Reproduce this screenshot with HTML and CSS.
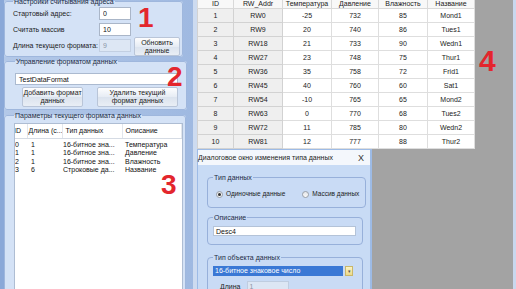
FILE: index.html
```html
<!DOCTYPE html>
<html lang="ru">
<head>
    <meta charset="UTF-8">
    <meta name="viewport" content="width=device-width, initial-scale=1.0">
    <title>Формат данных</title>
    <link rel="stylesheet" href="styles.css">
</head>
<body>
    <div class="app">
        <aside class="sidebar">
            <fieldset class="group group-read">
                <legend>Настройки считывания адреса</legend>
                <div class="read-grid">
                    <label>Стартовый адрес:</label>
                    <input class="field" type="text" value="0">
                    <span></span>
                    <label>Считать массив</label>
                    <input class="field" type="text" value="10">
                    <span></span>
                    <label>Длина текущего формата:</label>
                    <input class="field" type="text" value="9" disabled>
                    <button class="btn btn-refresh">Обновить<br>данные</button>
                </div>
            </fieldset>

            <fieldset class="group group-format">
                <legend>Управление форматом данных</legend>
                <div class="combo">
                    <span>TestDataFormat</span>
                    <span class="combo-arrow">&#9662;</span>
                </div>
                <div class="format-buttons">
                    <button class="btn btn-add">Добавить формат<br>данных</button>
                    <button class="btn btn-del">Удалить текущий<br>формат данных</button>
                </div>
            </fieldset>

            <fieldset class="group group-params">
                <legend>Параметры текущего формата данных</legend>
                <div class="listview">
                    <table class="list-table">
                        <colgroup>
                            <col class="c-id"><col class="c-len"><col class="c-type"><col class="c-desc">
                        </colgroup>
                        <thead>
                            <tr><th>ID</th><th>Длина (с...</th><th>Тип данных</th><th>Описание</th></tr>
                        </thead>
                        <tbody>
                            <tr><td>0</td><td>1</td><td>16-битное зна...</td><td>Температура</td></tr>
                            <tr><td>1</td><td>1</td><td>16-битное зна...</td><td>Давление</td></tr>
                            <tr><td>2</td><td>1</td><td>16-битное зна...</td><td>Влажность</td></tr>
                            <tr><td>3</td><td>6</td><td>Строковые да...</td><td>Название</td></tr>
                        </tbody>
                    </table>
                </div>
            </fieldset>
        </aside>

        <main class="workspace">
            <table class="grid">
                <colgroup>
                    <col class="g-id"><col class="g-addr"><col class="g-val"><col class="g-val2"><col class="g-val"><col class="g-val2">
                </colgroup>
                <thead>
                    <tr><th>ID</th><th>RW_Addr</th><th>Температура</th><th>Давление</th><th>Влажность</th><th>Название</th></tr>
                </thead>
                <tbody>
                    <tr><td class="rh">1</td><td class="rh">RW0</td><td>-25</td><td>732</td><td>85</td><td>Mond1</td></tr>
                    <tr><td class="rh">2</td><td class="rh">RW9</td><td>20</td><td>740</td><td>86</td><td>Tues1</td></tr>
                    <tr><td class="rh">3</td><td class="rh">RW18</td><td>21</td><td>733</td><td>90</td><td>Wedn1</td></tr>
                    <tr><td class="rh">4</td><td class="rh">RW27</td><td>23</td><td>748</td><td>75</td><td>Thur1</td></tr>
                    <tr><td class="rh">5</td><td class="rh">RW36</td><td>35</td><td>758</td><td>72</td><td>Frid1</td></tr>
                    <tr><td class="rh">6</td><td class="rh">RW45</td><td>40</td><td>760</td><td>60</td><td>Sat1</td></tr>
                    <tr><td class="rh">7</td><td class="rh">RW54</td><td>-10</td><td>765</td><td>65</td><td>Mond2</td></tr>
                    <tr><td class="rh">8</td><td class="rh">RW63</td><td>0</td><td>770</td><td>68</td><td>Tues2</td></tr>
                    <tr><td class="rh">9</td><td class="rh">RW72</td><td>11</td><td>785</td><td>80</td><td>Wedn2</td></tr>
                    <tr><td class="rh">10</td><td class="rh">RW81</td><td>12</td><td>777</td><td>88</td><td>Thur2</td></tr>
                </tbody>
            </table>

            <div class="dialog">
                <div class="dialog-title">
                    <span>Диалоговое окно изменения типа данных</span>
                    <span class="dialog-close">X</span>
                </div>
                <div class="dialog-body">
                    <fieldset class="dgroup dgroup-type">
                        <legend>Тип данных</legend>
                        <div class="radios">
                            <span class="radio"><span class="radio-dot checked"></span>Одиночные данные</span>
                            <span class="radio"><span class="radio-dot"></span>Массив данных</span>
                        </div>
                    </fieldset>
                    <fieldset class="dgroup dgroup-desc">
                        <legend>Описание</legend>
                        <div class="textbox">Desc4</div>
                    </fieldset>
                    <fieldset class="dgroup dgroup-object">
                        <legend>Тип объекта данных</legend>
                        <div class="dcombo">
                            <span class="dcombo-text">16-битное знаковое число</span>
                            <span class="dcombo-btn">&#9662;</span>
                        </div>
                        <div class="length-row">
                            <span>Длина</span>
                            <span class="textbox disabled">1</span>
                        </div>
                    </fieldset>
                </div>
            </div>
        </main>

        <span class="mark mark-1">1</span>
        <span class="mark mark-2">2</span>
        <span class="mark mark-3">3</span>
        <span class="mark mark-4">4</span>
    </div>
</body>
</html>
```

FILE: styles.css
```css
* {
    box-sizing: border-box;
}
body {
    margin: 0;
    width: 516px;
    height: 289px;
    overflow: hidden;
    background-color: #a3a3a3;
    font-family: "Liberation Sans", Arial, sans-serif;
    font-size: 7px;
    color: #1b1b1b;
}
.app {
    position: relative;
    display: flex;
    height: 289px;
    border-right: 3px solid #c9d8ee;
}

/* left panel */
.sidebar {
    width: 197px;
    flex: none;
    overflow: hidden;
    padding: 0 10px 0 4px;
    background: linear-gradient(to right, #8aa8d8 0, #8aa8d8 4px, #b3c8e8 4px, #9fb9e1 100%);
    border-right: 4px solid #cddbf0;
}
.group {
    margin: 0;
    padding: 0 2px 0 8px;
    border: 1px solid #9fb7dd;
    border-radius: 3px;
    background-color: #d4e2f6;
}
.group legend,
.dgroup legend {
    padding: 0 1px;
    font-size: 7px;
    line-height: 9px;
    color: #1d2d45;
    white-space: nowrap;
}
.group-read {
    margin-top: -3px;
    padding-bottom: 4px;
}
.read-grid {
    display: grid;
    grid-template-columns: 83px 32px 46px;
    grid-template-rows: repeat(3, 13px);
    column-gap: 3px;
    row-gap: 3px;
    padding-top: 1px;
}
.read-grid label {
    line-height: 13px;
    white-space: nowrap;
}
.field {
    width: 32px;
    height: 13px;
    margin: 0;
    padding: 0 3px;
    border: 1px solid #aab6c8;
    background-color: #fff;
    font-family: inherit;
    font-size: 7px;
    color: #111;
}
.field:disabled {
    background-color: #dde7f4;
    border-color: #c2cfe2;
    color: #8b96a6;
}
.btn {
    margin: 0;
    padding: 0;
    border: 1px solid #b9c5d8;
    border-radius: 2px;
    background: linear-gradient(#fdfdfe, #e6ecf4 50%, #dbe3ee 51%, #e9eef5);
    font-family: inherit;
    font-size: 7px;
    line-height: 8px;
    color: #1b1b1b;
}
.btn-refresh {
    height: 19px;
    margin-top: -2px;
    align-self: start;
}

.group-format {
    padding: 7px 8px 2px 10px;
}
.combo {
    display: flex;
    justify-content: space-between;
    align-items: center;
    height: 12px;
    padding: 0 2px 0 3px;
    border: 1px solid #abbad0;
    background-color: #fff;
    color: #111;
}
.combo-arrow {
    font-size: 6px;
    color: #555;
}
.format-buttons {
    display: flex;
    gap: 14px;
    margin-top: 2px;
    padding-left: 7px;
}
.btn-add {
    width: 61px;
    height: 20px;
}
.btn-del {
    width: 81px;
    height: 20px;
}

.group-params {
    margin-top: 1px;
    padding: 3px 2px 0 9px;
    height: 200px;
}
.listview {
    height: 190px;
    overflow: hidden;
    border: 1px solid #aebdd3;
    background-color: #fff;
}
.list-table {
    margin-left: -4px;
    border-collapse: collapse;
    table-layout: fixed;
    width: 170px;
    color: #111;
}
.c-id { width: 16px; }
.c-len { width: 35px; }
.c-type { width: 60px; }
.c-desc { width: 59px; }
.list-table th {
    height: 14px;
    padding: 0 0 0 3px;
    border-right: 1px solid #e2e6ec;
    border-bottom: 1px solid #d5dbe4;
    font-weight: normal;
    text-align: left;
    white-space: nowrap;
    overflow: hidden;
}
.list-table th:nth-child(2) {
    padding-left: 1px;
}
.list-table tbody tr:first-child td {
    padding-top: 2px;
    height: 10.5px;
}
.list-table td {
    height: 8.5px;
    padding: 0 0 0 4px;
    line-height: 8.5px;
    white-space: nowrap;
    overflow: hidden;
}
.list-table td:nth-child(3) {
    padding-left: 1px;
}
.list-table td:nth-child(4) {
    padding-left: 3px;
}

/* workspace */
.workspace {
    position: relative;
    flex: 1;
    overflow: hidden;
    background-color: #a3a3a3;
}
.grid {
    margin-top: -2px;
    border-collapse: collapse;
    table-layout: fixed;
    width: 278px;
    background-color: #fff;
    font-size: 7px;
    color: #222;
    text-align: center;
}
.g-id { width: 36px; }
.g-addr { width: 49px; }
.g-val { width: 49px; }
.g-val2 { width: 47px; }
.grid th {
    height: 10px;
    padding: 0;
    border: 1px solid #d9d9d9;
    background-color: #f8f8f8;
    font-weight: normal;
}
.grid td {
    height: 14px;
    padding: 0;
    border: 1px solid #dedede;
}
.grid td.rh {
    background-color: #efefef;
    border-color: #d2d2d2;
}

/* dialog window */
.dialog {
    position: absolute;
    left: -1px;
    top: 149px;
    width: 176px;
    height: 160px;
    border: 2px solid #9dbbe6;
    border-top-width: 1px;
    background-color: #c8dbf5;
}
.dialog-title {
    display: flex;
    justify-content: space-between;
    align-items: center;
    height: 15px;
    padding: 0 6px 0 0;
    background-color: #f4f7fc;
    color: #1b1b1b;
}
.dialog-close {
    font-size: 9px;
    color: #333;
}
.dialog-body {
    padding: 8px 7px 0 9px;
}
.dgroup {
    margin: 0;
    padding: 0 6px 0 5px;
    border: 1px solid #97b0da;
    border-radius: 4px;
    background-color: #c9dbf5;
}
.dgroup-type {
    padding-top: 8px;
    padding-bottom: 9px;
}
.radios {
    display: flex;
    gap: 17px;
    padding-left: 3px;
    font-size: 6.5px;
    line-height: 8px;
    white-space: nowrap;
}
.radio {
    display: flex;
    align-items: center;
    gap: 3px;
}
.radio-dot {
    display: flex;
    align-items: center;
    justify-content: center;
    width: 7px;
    height: 7px;
    border: 1px solid #9aa0a8;
    border-radius: 50%;
    background: linear-gradient(#e4e6e9, #f8f8f8);
}
.radio-dot.checked::after {
    content: "";
    width: 3px;
    height: 3px;
    border-radius: 50%;
    background-color: #333;
}
.dgroup-desc {
    margin-top: 5px;
    padding-top: 4px;
    padding-bottom: 8px;
}
.textbox {
    height: 10px;
    padding: 0 2px;
    line-height: 9px;
    border: 1px solid #b4c3d8;
    background-color: #fff;
    color: #111;
}
.dgroup-object {
    margin-top: 8px;
    padding-top: 4px;
    height: 60px;
}
.dcombo {
    display: flex;
    gap: 2px;
    height: 10px;
    width: 140px;
}
.dcombo-text {
    flex: 1;
    padding: 0 2px;
    line-height: 10px;
    background-color: #3a78d5;
    color: #fff;
}
.dcombo-btn {
    width: 8px;
    border: 1px solid #c9b76a;
    background: linear-gradient(#fbf3c4, #ecd98a);
    font-size: 5px;
    line-height: 8px;
    text-align: center;
    color: #555;
}
.length-row {
    display: flex;
    align-items: center;
    gap: 4px;
    margin-top: 5px;
    padding-left: 7px;
}
.length-row .textbox {
    width: 42px;
    height: 11px;
    margin-left: 2px;
}
.textbox.disabled {
    background-color: #dce6f4;
    border-color: #bfcde0;
    color: #8c96a4;
}

/* red callout numbers over the screen */
.mark {
    position: absolute;
    font-size: 28px;
    line-height: 28px;
    font-weight: bold;
    color: #e3262d;
}
.mark-1 { left: 138px; top: 4px; }
.mark-2 { left: 167px; top: 63px; }
.mark-3 { left: 161px; top: 171px; }
.mark-4 { left: 479px; top: 46px; font-size: 30px; line-height: 30px; }
```
